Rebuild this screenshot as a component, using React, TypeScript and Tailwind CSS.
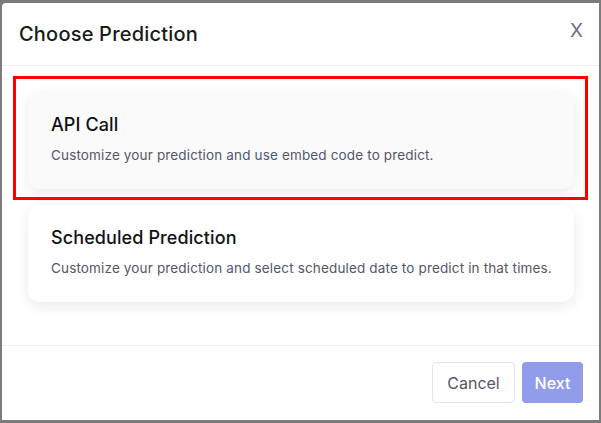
import { useState } from "react";

type Option = { id: string; title: string; description: string };

const options: Option[] = [
  { id: "api", title: "API Call", description: "Customize your prediction and use embed code to predict." },
  {
    id: "scheduled",
    title: "Scheduled Prediction",
    description: "Customize your prediction and select scheduled date to predict in that times.",
  },
];

export default function App() {
  const [selected, setSelected] = useState("api");

  return (
    <div
      className="h-[423px] w-[601px] bg-[#7b7b7b] pb-[3px] pl-[2px] pr-[2px] pt-[3px]"
      style={{ fontFamily: "Inter, 'Liberation Sans', sans-serif" }}
    >
      <div className="flex h-full flex-col rounded-tl-[4px] bg-white">
        <div className="flex h-[63px] items-center justify-between border-b border-[#ebebf2] pl-[17px] pr-[16px]">
          <h2 className="text-[20px] font-medium tracking-[0.2px] text-[#1a1a1a]">Choose Prediction</h2>
          <button className="pb-[6px] text-[19px] text-[#6b6e80]">X</button>
        </div>

        <div className="flex flex-1 flex-col gap-[16px] px-[26px] pt-[26px] pr-[25px]">
          {options.map((o) => (
            <div
              key={o.id}
              onClick={() => setSelected(o.id)}
              className={`relative h-[97px] cursor-pointer rounded-[12px] pl-[23px] pt-[21px] shadow-[0_4px_14px_rgba(30,30,60,0.09)] ${
                selected === o.id ? "bg-[#fafafa]" : "bg-white"
              }`}
            >
              {selected === o.id && (
                <div className="pointer-events-none absolute -bottom-[11px] -left-[15px] -right-[14px] -top-[16px] border-[3px] border-[#ff0000]" />
              )}
              <h3 className="text-[18px] font-medium leading-[23px] tracking-[0.1px] text-[#111]">{o.title}</h3>
              <p className="mt-[10px] text-[13.5px] leading-[18px] tracking-[0.15px] text-[#55566a]">
                {o.description}
              </p>
            </div>
          ))}
        </div>

        <div className="flex h-[75px] justify-end gap-[7px] border-t border-[#ebebf2] pr-[16px] pt-[16px]">
          <button className="h-[41px] w-[83px] rounded-[4px] border border-[#e2e2ea] text-[16px] text-[#55566a]">
            Cancel
          </button>
          <button className="h-[41px] w-[61px] rounded-[4px] bg-[#919cea] text-[16px] font-medium text-white">
            Next
          </button>
        </div>
      </div>
    </div>
  );
}
